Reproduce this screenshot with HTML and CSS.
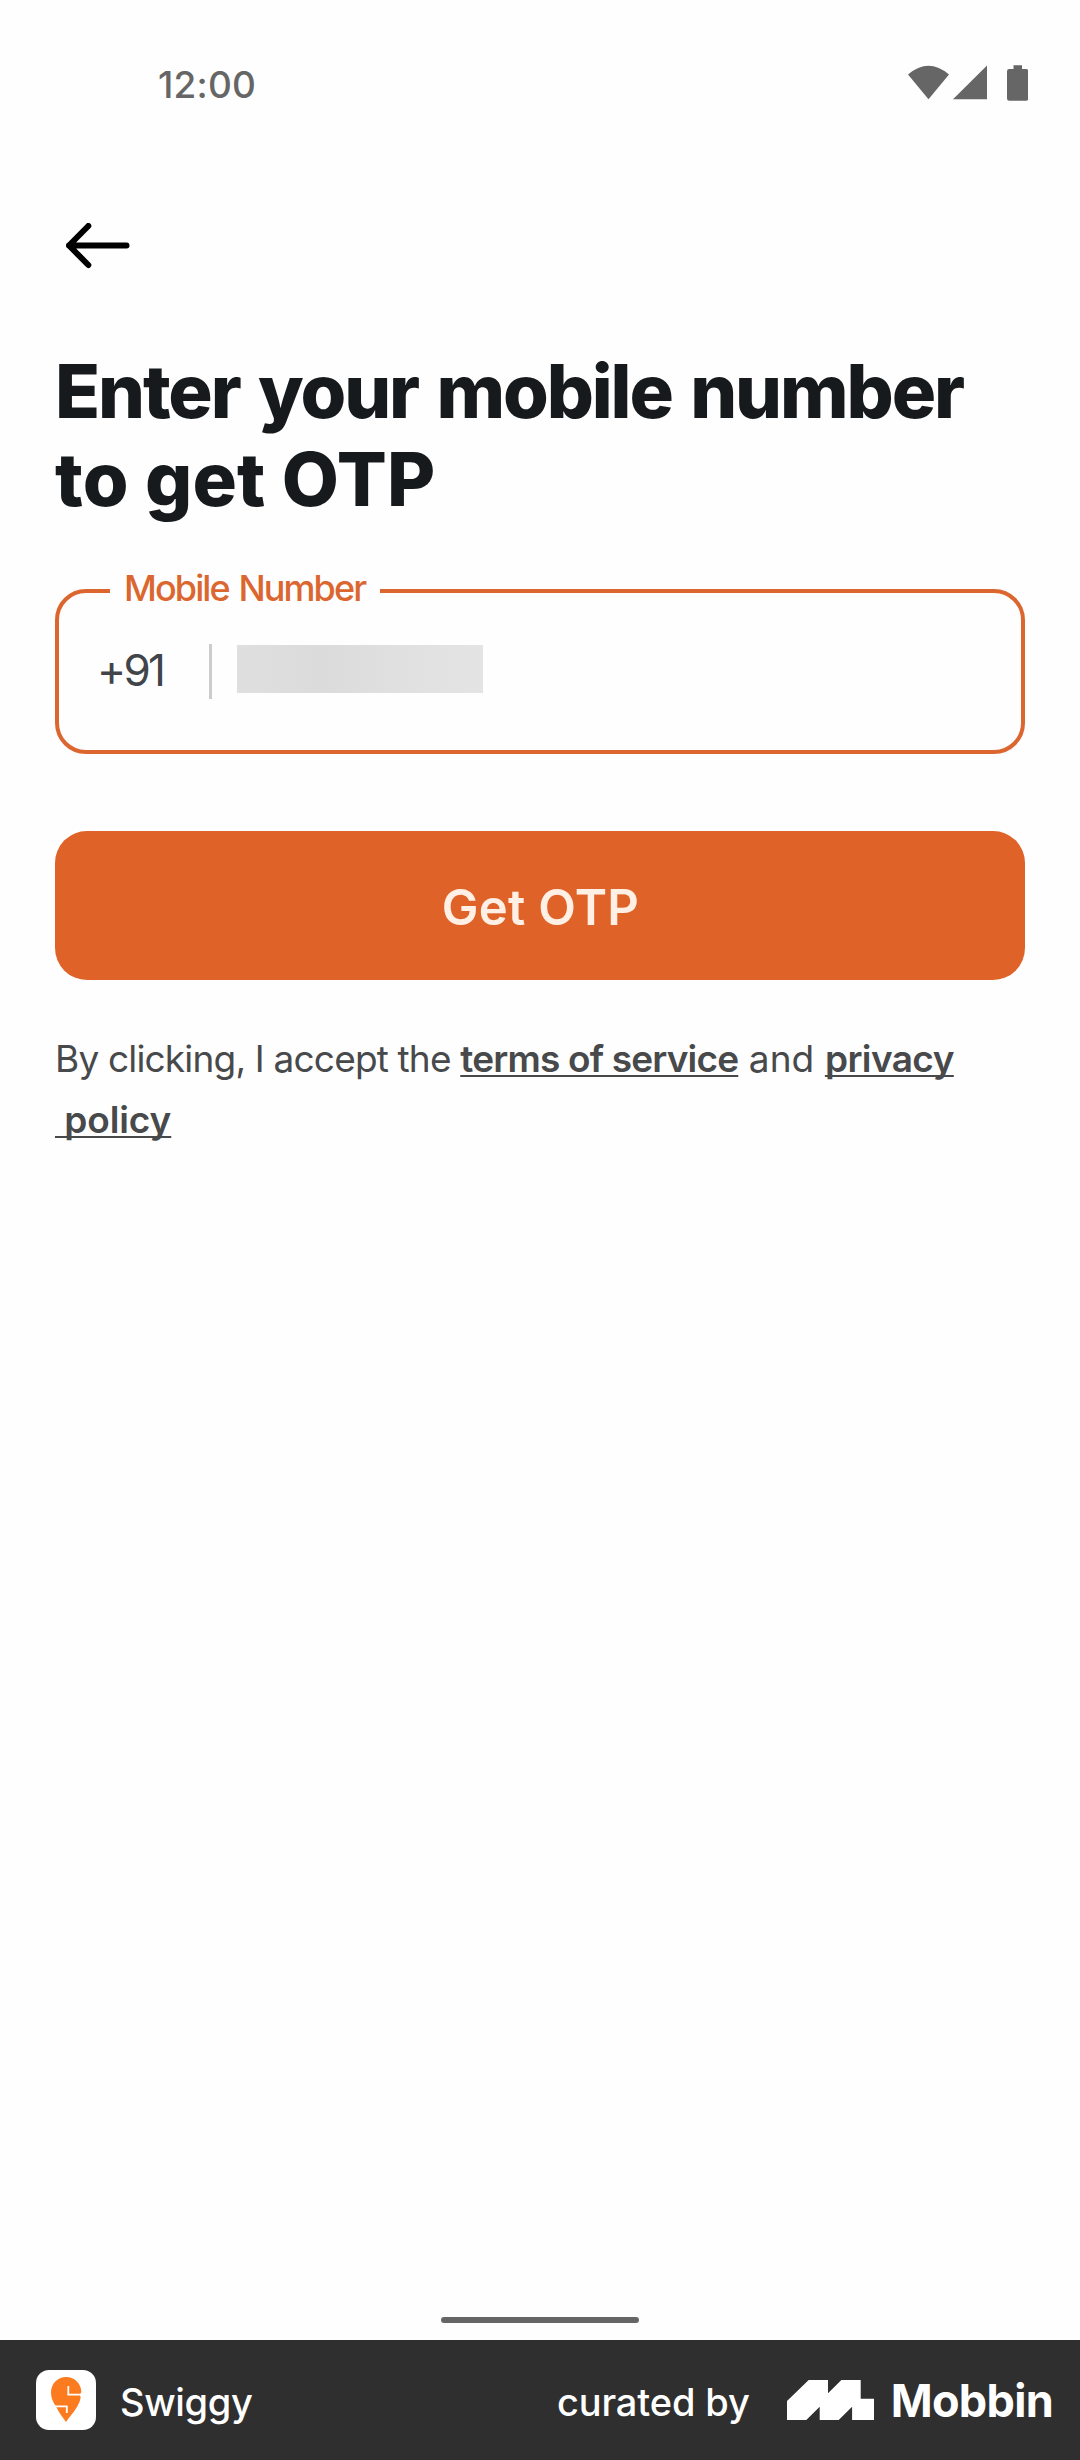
FILE: index.html
```
<!DOCTYPE html>
<html lang="en">
<head>
<meta charset="utf-8">
<title>Enter your mobile number</title>
<link rel="stylesheet" href="styles.css">
</head>
<body>
<div class="screen">
  <header class="status-bar">
    <span class="clock">12:00</span>
    <svg class="status-icons" viewBox="0 0 120 36" width="120" height="36" aria-hidden="true">
      <path d="M0 9.5Q20.5 -8 41 9.5L20.5 34.3Z"/>
      <path d="M45 34.3L79 .5V34.3Z"/>
      <path d="M105.500 .3h8.500v3.700h4q2.200 0 2.200 2.200v27.300q0 2.200-2.200 2.200H101.200q-2.200 0-2.200-2.200V6.200q0-2.200 2.200-2.200h4.300Z"/>
    </svg>
  </header>

  <main class="content">
    <button class="back" type="button" aria-label="Back">
      <svg viewBox="0 0 64 46" width="64" height="46"><path d="M22.300 3L3 22.500L22.300 42M3 22.500H60.500"/></svg>
    </button>

    <h1 class="title"><span class="title-first">Enter your mobile number</span><br>to get OTP</h1>

    <div class="field">
      <span class="field-label">Mobile Number</span>
      <span class="dial-code">+91</span>
      <span class="divider"></span>
      <span class="redacted"></span>
    </div>

    <button class="submit" type="button">Get OTP</button>

    <p class="terms">By clicking, I accept the <a class="link link-terms">terms of service</a><span class="joiner"> and </span><a class="link">privacy</a><br><a class="link link-wrapped">&nbsp;policy</a></p>
  </main>

  <div class="home-bar"></div>

  <footer class="footer">
    <svg class="app-icon" viewBox="0 0 60 60" width="60" height="60" aria-hidden="true">
      <rect width="60" height="60" rx="13" fill="#fff"/>
      <path fill="#fc7b1e" d="M30 7C39 7 45 14 45.300 21.500Q45.400 23.700 44 23.700L44 25.500Q45 26.500 44.400 29C42.500 37 35 45 30 52C26.500 47 22.500 42 20 36.500C17 32 15 28 15 22.500C15 14 21.500 7 30 7Z"/>
      <path fill="none" stroke="#fff" stroke-width="1.800" d="M32.300 16V24.600H46M19 36.400H30.800V43"/>
    </svg>
    <span class="app-name">Swiggy</span>
    <span class="curated">curated by</span>
    <svg class="brand-mark" viewBox="0 0 87 40" width="87" height="40" aria-hidden="true">
      <path d="M0 21L21.700 0H41V13.300L54.400 0H73.700V18.700H87V40H65.100V26.700L51.700 40H32.700V26.700L19.300 40H0Z"/>
    </svg>
    <span class="brand">Mobbin</span>
  </footer>
</div>
</body>
</html>
```
FILE: styles.css
```
* {
  box-sizing: border-box;
}

body {
  margin: 0;
  background: #fefefe;
  font-family: Inter, "Liberation Sans", sans-serif;
  color: #171a1d;
}

button {
  border: 0;
  padding: 0;
  font-family: inherit;
}

.screen {
  display: flex;
  flex-direction: column;
  width: 1080px;
  height: 2460px;
}

.status-bar {
  display: flex;
  justify-content: space-between;
  align-items: flex-start;
  height: 168px;
  padding: 54px 52px 0 158px;
}

.clock {
  padding-top: 1px;
  font-size: 37px;
  font-weight: 500;
  line-height: 60px;
  letter-spacing: 0.2px;
  color: #666;
}

.status-icons {
  margin-top: 11px;
  fill: #666;
}

.content {
  flex: 1;
  padding: 0 55px;
}

.back {
  display: block;
  margin: 55px 0 0 11px;
  height: 46px;
  background: none;
}

.back svg {
  display: block;
  fill: none;
  stroke: #000;
  stroke-width: 6;
  stroke-linecap: round;
  stroke-linejoin: round;
}

.title {
  margin: 78px 0 0;
  font-size: 74px;
  font-weight: 800;
  line-height: 88px;
  letter-spacing: 0.16px;
  white-space: nowrap;
}

.title-first {
  letter-spacing: -2.1px;
  word-spacing: 4.3px;
}

.field {
  position: relative;
  display: flex;
  align-items: flex-start;
  height: 165px;
  margin-top: 66px;
  padding: 51px 0 0 38px;
  border: 4px solid #dc662f;
  border-radius: 31px;
}

/* The label sits over the outline and interrupts it. */
.field-label {
  position: absolute;
  left: 51px;
  top: -24px;
  width: 270px;
  padding-left: 14px;
  background: #fefefe;
  color: #dc662f;
  font-size: 36px;
  font-weight: 500;
  line-height: 38px;
  letter-spacing: -1.9px;
  word-spacing: 2px;
  white-space: nowrap;
}

.dial-code {
  width: 112px;
  padding-top: 1px;
  font-size: 44px;
  line-height: 50px;
  letter-spacing: -2.7px;
  color: #414449;
}

.divider {
  width: 3px;
  height: 55px;
  background: #ccc;
}

.redacted {
  width: 246px;
  height: 48px;
  margin: 1px 0 0 25px;
  background: linear-gradient(90deg, #dfdfdf, #dbdbdb 35%, #e0e0e0 65%, #e4e4e4);
}

.submit {
  display: block;
  width: 970px;
  height: 149px;
  margin-top: 77px;
  padding: 3px 0 0 1px;
  border-radius: 32px;
  background: #df6228;
  color: #ffefe5;
  font-size: 49px;
  font-weight: 600;
  letter-spacing: 0.3px;
}

.terms {
  margin: 48px 0 0;
  font-size: 37px;
  font-weight: 400;
  line-height: 61px;
  letter-spacing: -0.82px;
  color: #47494b;
  white-space: nowrap;
}

.joiner {
  letter-spacing: 0.1px;
}

.link {
  font-weight: 600;
  letter-spacing: -0.6px;
  text-decoration: underline;
  text-decoration-thickness: 2px;
  text-underline-offset: 3px;
  text-decoration-skip-ink: none;
}

.link-terms {
  letter-spacing: -0.82px;
}

.link-wrapped {
  letter-spacing: -0.1px;
}

.home-bar {
  width: 198px;
  height: 6px;
  margin: 0 auto 17px;
  border-radius: 3px;
  background: #666;
}

.footer {
  display: flex;
  align-items: center;
  height: 120px;
  padding: 0 27px 0 36px;
  background: #2f2f2f;
  color: #fff;
}

.app-name,
.curated {
  font-size: 38px;
  font-weight: 500;
  line-height: 48px;
  padding-top: 4px;
}

.app-name {
  margin-left: 24px;
  letter-spacing: -0.34px;
}

.curated {
  margin-left: auto;
  letter-spacing: -0.13px;
}

.brand-mark {
  margin-left: 37px;
  fill: #fff;
}

.brand {
  margin-left: 17px;
  padding-top: 2px;
  font-size: 45px;
  font-weight: 700;
  line-height: 50px;
  letter-spacing: -0.69px;
}
```
